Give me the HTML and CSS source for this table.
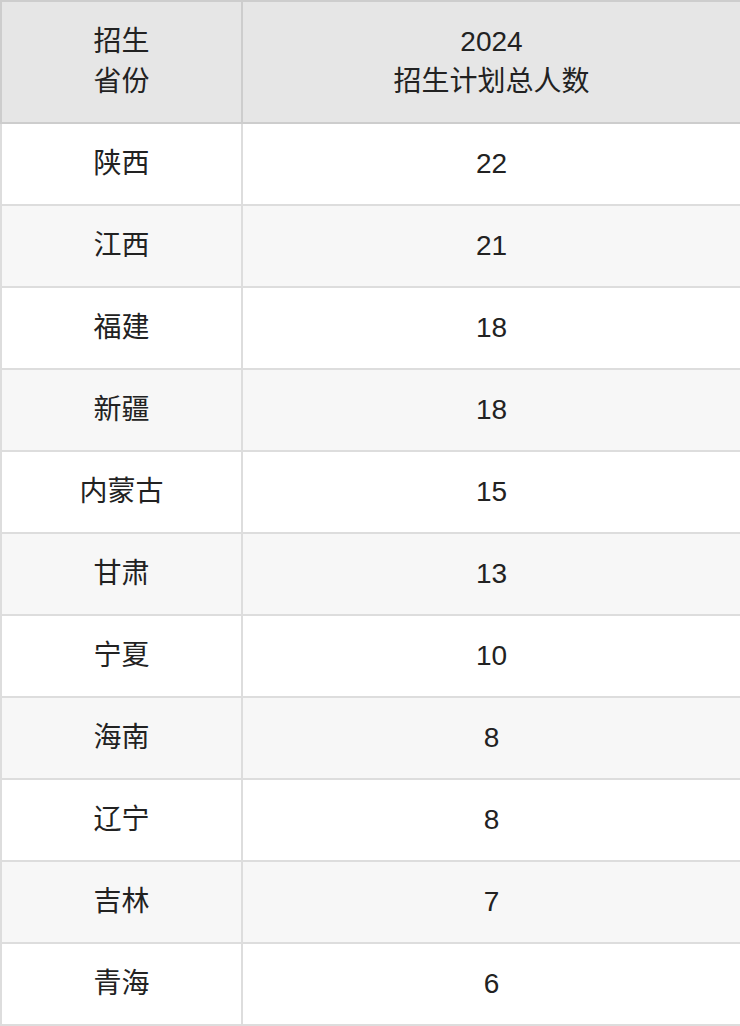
FILE: index.html
```html
<!DOCTYPE html>
<html lang="zh-CN">
<head>
<meta charset="utf-8">
<title>招生计划</title>
<link rel="stylesheet" href="styles.css">
</head>
<body>
<table class="plan">
  <colgroup>
    <col class="col-prov">
    <col class="col-num">
  </colgroup>
  <thead>
    <tr><th>招生<br>省份</th><th>2024<br>招生计划总人数</th></tr>
  </thead>
  <tbody>
    <tr><td>陕西</td><td>22</td></tr>
    <tr><td>江西</td><td>21</td></tr>
    <tr><td>福建</td><td>18</td></tr>
    <tr><td>新疆</td><td>18</td></tr>
    <tr><td>内蒙古</td><td>15</td></tr>
    <tr><td>甘肃</td><td>13</td></tr>
    <tr><td>宁夏</td><td>10</td></tr>
    <tr><td>海南</td><td>8</td></tr>
    <tr><td>辽宁</td><td>8</td></tr>
    <tr><td>吉林</td><td>7</td></tr>
    <tr><td>青海</td><td>6</td></tr>
  </tbody>
</table>
</body>
</html>
```
FILE: styles.css
```css
html, body {
  margin: 0;
  padding: 0;
  background: #ffffff;
}
.plan {
  width: 740px;
  border-collapse: collapse;
  table-layout: fixed;
  font-family: "Liberation Sans", "Noto Sans CJK SC", sans-serif;
  font-size: 28px;
  line-height: 40px;
  color: #222222;
}
.col-prov { width: 241px; }
.col-num { width: 499px; }
.plan th,
.plan td {
  padding: 20px 0;
  text-align: center;
  vertical-align: middle;
}
.plan th {
  font-weight: normal;
  background: #e6e6e6;
  border: 2px solid #cdcdcd;
}
.plan td {
  border: 2px solid #dddddd;
}
.plan tbody tr:nth-child(even) td {
  background: #f7f7f7;
}
```
